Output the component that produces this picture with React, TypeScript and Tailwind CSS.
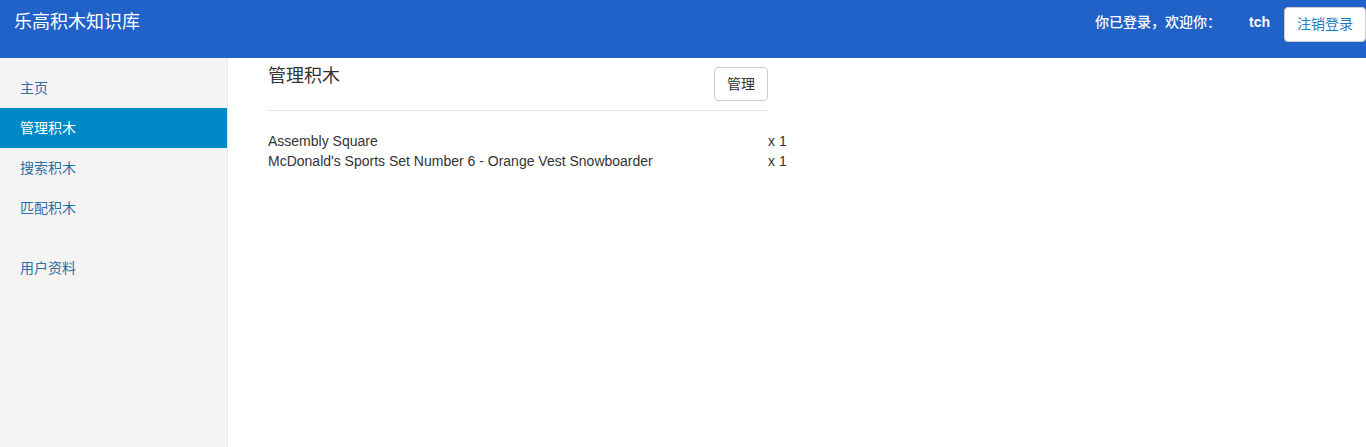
import React from 'react';

const font = { fontFamily: '"Liberation Sans", "Noto Sans CJK SC", sans-serif' };

const navItems = [
  { label: '主页', active: false },
  { label: '管理积木', active: true },
  { label: '搜索积木', active: false },
  { label: '匹配积木', active: false },
];

const bricks = [
  { name: 'Assembly Square', count: 1 },
  { name: "McDonald's Sports Set Number 6 - Orange Vest Snowboarder", count: 1 },
];

export default function App() {
  return (
    <div className="flex h-[447px] w-[1366px] flex-col bg-white text-[14px] text-[#333]" style={font}>
      <header className="flex h-[58px] shrink-0 items-start justify-between bg-[#2162c9] text-white">
        <div className="pl-[14px] pt-[10px] text-[18px] leading-[24px]">乐高积木知识库</div>
        <div className="flex items-start">
          <span className="pt-[12px] text-[14px] font-medium leading-[20px]">你已登录，欢迎你：</span>
          <span className="ml-[28px] pt-[12px] text-[14px] font-bold leading-[20px]">tch</span>
          <button className="ml-[14px] mt-[7px] h-[35px] w-[82px] rounded-[4px] border border-[#ccc] bg-white text-[14px] text-[#1f7ac2]">
            注销登录
          </button>
        </div>
      </header>

      <div className="flex flex-1">
        <aside className="w-[228px] shrink-0 border-r border-[#e7e7e7] bg-[#f5f4f3] pt-[10px]">
          {navItems.map((item) => (
            <div
              key={item.label}
              className={
                item.active
                  ? 'h-[40px] bg-[#0088c6] pl-[20px] leading-[40px] text-white'
                  : 'h-[40px] pl-[20px] leading-[40px] text-[#2a6fa8]'
              }
            >
              {item.label}
            </div>
          ))}
          <div className="mt-[20px] h-[40px] pl-[20px] leading-[40px] text-[#2a6fa8]">用户资料</div>
        </aside>

        <main className="pl-[40px]">
          <div className="flex w-[500px] items-start justify-between border-b border-[#e5e5e5] pb-[9px]">
            <h2 className="pt-[7px] text-[18px] leading-[22px] text-[#333]">管理积木</h2>
            <button className="mt-[9px] h-[34px] w-[54px] rounded-[4px] border border-[#ccc] bg-white text-[14px] text-[#333]">
              管理
            </button>
          </div>
          <div className="pt-[20px]">
            {bricks.map((b) => (
              <div key={b.name} className="flex leading-[20px]">
                <span className="w-[500px]">{b.name}</span>
                <span>x {b.count}</span>
              </div>
            ))}
          </div>
        </main>
      </div>
    </div>
  );
}
